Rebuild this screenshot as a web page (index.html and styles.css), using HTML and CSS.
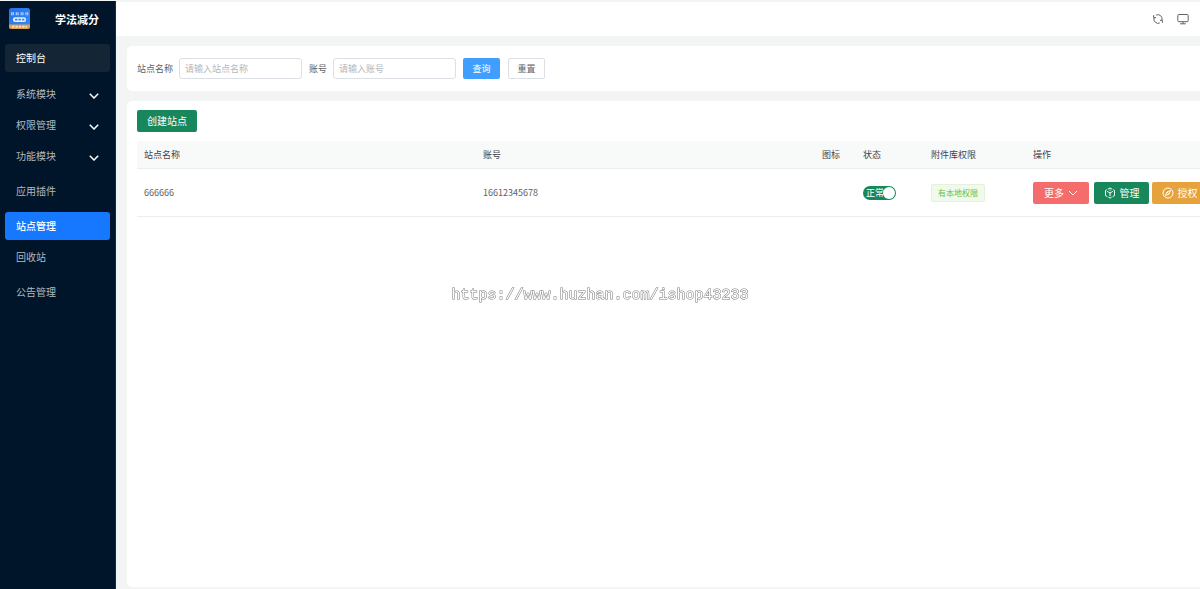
FILE: index.html
```html
<!DOCTYPE html>
<html lang="zh-CN">
<head>
<meta charset="utf-8">
<title>学法减分</title>
<link rel="stylesheet" href="styles.css">
</head>
<body>
<div class="app">
  <aside class="sidebar">
    <div class="brand">
      <svg class="logo" viewBox="0 0 21 21" aria-hidden="true">
        <defs>
          <linearGradient id="sky" x1="0" y1="0" x2="1" y2="1"><stop offset="0" stop-color="#2a6fe6"/><stop offset="1" stop-color="#2f8dff"/></linearGradient>
          <clipPath id="tile"><rect width="21" height="21" rx="2.5"/></clipPath>
        </defs>
        <g clip-path="url(#tile)">
          <rect width="21" height="21" fill="url(#sky)"/>
          <path d="M0 16.5h21V21H0z" fill="#dfa04c"/>
          <path d="M2 5.8h3M6.7 5.8h3M11.6 5.8h3M16.3 5.8h3" stroke="#a9cbff" stroke-width="3" stroke-dasharray="1.3 .4"/>
          <rect x="4" y="9.3" width="13" height="4.6" rx="2" fill="#e6f1ff"/>
          <path d="M6 11.6h2.4M9.5 11.6h2.4M13 11.6h2.4" stroke="#3b82ee" stroke-width="1.8"/>
          <path d="M3 18.7h15" stroke="#f8dfb4" stroke-width="2" stroke-dasharray="2.4 1"/>
        </g>
      </svg>
      <h1 class="title">学法减分</h1>
    </div>
    <nav class="menu">
      <a class="item home" href="#">控制台</a>
      <a class="item" href="#">系统模块<svg class="chev" viewBox="0 0 10 6"><path d="M.8.7 5 5 9.2.7"/></svg></a>
      <a class="item" href="#">权限管理<svg class="chev" viewBox="0 0 10 6"><path d="M.8.7 5 5 9.2.7"/></svg></a>
      <a class="item" href="#">功能模块<svg class="chev" viewBox="0 0 10 6"><path d="M.8.7 5 5 9.2.7"/></svg></a>
      <a class="item spaced" href="#">应用插件</a>
      <a class="item spaced active" href="#">站点管理</a>
      <a class="item" href="#">回收站</a>
      <a class="item spaced" href="#">公告管理</a>
    </nav>
  </aside>
  <div class="page">
    <header class="topbar">
      <button class="tool" aria-label="刷新"><svg viewBox="0 0 12 12"><path d="M4.2 2A4.3 4.3 0 0 1 10 7M7.8 10A4.3 4.3 0 0 1 2 5M1.6 2.2V4.6H4M10.4 9.8V7.4H8"/></svg></button>
      <button class="tool" aria-label="全屏"><svg viewBox="0 0 12 12"><rect x=".8" y="1.5" width="10.4" height="7.2" rx="1"/><path d="M6 8.7v2M3.2 10.8h5.6"/></svg></button>
    </header>
    <main class="content">
      <form class="card search">
        <label for="site">站点名称</label>
        <input id="site" type="text" placeholder="请输入站点名称">
        <label for="account">账号</label>
        <input id="account" type="text" placeholder="请输入账号">
        <button class="btn query" type="button">查询</button>
        <button class="btn reset" type="reset">重置</button>
      </form>
      <section class="card list">
        <button class="btn create">创建站点</button>
        <table class="sites">
          <colgroup><col class="wide"><col class="wide"><col class="icon"><col class="state"><col class="perm"><col class="ops"></colgroup>
          <thead><tr><th>站点名称</th><th>账号</th><th>图标</th><th>状态</th><th>附件库权限</th><th>操作</th></tr></thead>
          <tbody>
            <tr>
              <td>666666</td>
              <td>16612345678</td>
              <td></td>
              <td><label class="switch"><input type="checkbox" role="switch" checked><span>正常</span></label></td>
              <td><span class="tag">有本地权限</span></td>
              <td>
                <div class="actions">
                  <button class="btn more">更多<svg class="down" viewBox="0 0 10 10"><path d="M1 3l4 4 4-4"/></svg></button>
                  <button class="btn manage"><svg viewBox="0 0 12 12"><path d="M3.8 2.2 6 1l2.2 1.2M9.2 2.7l1.3.7v5.2L8.6 9.7M7.6 10.2 6 11.1l-1.6-.9M3.4 9.7 1.5 8.6V3.4l1.3-.7M3.2 4.4 6 6l2.8-1.6M6 6v3.2M6 2.6v1.2"/></svg>管理</button>
                  <button class="btn grant"><svg viewBox="0 0 12 12"><circle cx="6" cy="6" r="5"/><path d="M8.5 3.5 7 7 3.5 8.5 5 5zM5 5l2 2"/></svg>授权</button>
                </div>
              </td>
            </tr>
          </tbody>
        </table>
      </section>
    </main>
  </div>
</div>
<div class="watermark">https://www.huzhan.com/ishop43233</div>
</body>
</html>
```
FILE: styles.css
```css
* { box-sizing: border-box; }
body {
  margin: 0;
  overflow: hidden;
  background: #f3f5f5;
  color: #606266;
  font: 9px/14px "Noto Sans CJK SC", "Noto Sans", sans-serif;
}
button, input { font: inherit; color: inherit; }
button { cursor: pointer; }
svg { fill: none; stroke: currentColor; flex: none; }
.app { display: flex; min-height: 100vh; padding-top: 1px; }

.sidebar { flex: 0 0 116px; background: #001529; border-right: 1px solid #1b2a45; }
.brand { display: flex; align-items: center; height: 35px; padding-left: 9px; }
.logo { width: 21px; height: 21px; stroke: none; }
.title { margin: 0 0 0 25px; font-size: 11px; line-height: 16px; font-weight: 700; color: #fff; }
.menu { display: flex; flex-direction: column; gap: 3px; padding: 8px 5px; }
.item {
  display: flex; align-items: center; justify-content: space-between;
  height: 28px; padding: 0 11px; border-radius: 3px;
  color: #b3b9bf; font-size: 10px; text-decoration: none;
}
.home { margin-bottom: 5px; background: #142636; color: #fff; }
.spaced { margin-top: 4px; }
.active { background: #1677ff; color: #fff; font-weight: 500; }
.chev { width: 10px; height: 6px; margin-top: 3px; stroke: #fff; stroke-width: 1.5; }

.page { flex: 1; min-width: 0; display: flex; flex-direction: column; padding: 1px 0 2px; }
.topbar {
  display: flex; align-items: center; justify-content: flex-end; gap: 13px;
  height: 34px; padding-right: 11px; background: #fff;
}
.tool { display: flex; padding: 0; border: 0; background: none; }
.tool svg { width: 12px; height: 12px; }
.content { flex: 1; display: flex; flex-direction: column; gap: 10px; padding: 10px 0 0 11px; }
.card { padding: 12px 0 12px 10px; background: #fff; border-radius: 5px 0 0 5px; }
.search { display: flex; align-items: center; }
.search label { margin-right: 6px; }
.search input {
  width: 123px; height: 21px; margin-right: 7px; padding: 0 5px;
  border: 1px solid #dcdfe6; border-radius: 3px; background: #fff;
}
.search input::placeholder { color: #b4b7bd; opacity: 1; }
.btn {
  display: flex; align-items: center; justify-content: center; gap: 4px;
  height: 21px; padding: 0 9px; border: 0; border-radius: 2px; color: #fff; white-space: nowrap;
}
.query { width: 37px; margin-right: 8px; background: #409eff; }
.reset { width: 37px; border: 1px solid #dcdfe6; background: #fff; color: #606266; }

.list { flex: 1; min-width: 0; padding-top: 9px; overflow: hidden; }
.create { width: 60px; height: 22px; margin-bottom: 9px; padding: 0; background: #18875c; font-size: 10px; }
.sites { width: 1180px; table-layout: fixed; border-collapse: separate; border-spacing: 0; }
.wide { width: 339px; }
.icon { width: 41px; }
.state { width: 68px; }
.perm { width: 102px; }
.sites th, .sites td { padding: 0 7px; border-bottom: 1px solid #ebeef0; text-align: left; font-weight: 400; }
.sites th { height: 28px; background: #f8faf9; color: #404347; }
.sites td { height: 48px; }
.switch { display: block; position: relative; width: 33px; height: 14px; }
.switch input { display: block; width: 33px; height: 14px; margin: 0; border-radius: 7px; appearance: none; background: #18875c; }
.switch input::after {
  content: ""; position: absolute; top: 1px; right: 1px;
  width: 12px; height: 12px; border-radius: 50%; background: #fff;
}
.switch span { position: absolute; top: 0; left: 3px; color: #fff; }
.tag {
  display: inline-block; padding: 1px 6px; border: 1px solid #e1f3d8;
  border-radius: 2px; background: #f0f9eb; color: #67c23a; font-size: 8px; white-space: nowrap;
}
.actions { display: flex; }
.actions .btn { height: 22px; font-size: 10px; }
.actions svg { width: 12px; height: 12px; }
.actions .down { width: 10px; height: 10px; }
.more { width: 56px; margin-right: 5px; background: #f56c6c; }
.manage { width: 55px; margin-right: 3px; background: #18875c; }
.grant { width: 55px; background: #e6a23c; }

.watermark {
  position: fixed; top: 50%; left: 0; right: 0; margin-top: -9px;
  text-align: center; pointer-events: none;
  font: 15px/20px "Liberation Mono", monospace;
  color: #fff; -webkit-text-stroke: 1px #777; paint-order: stroke fill;
}
```
